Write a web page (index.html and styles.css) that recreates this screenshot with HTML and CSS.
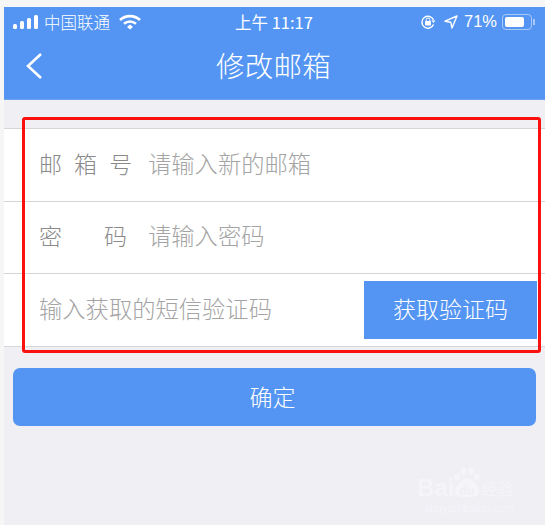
FILE: index.html
```html
<!DOCTYPE html>
<html lang="zh-CN">
<head>
    <meta charset="UTF-8">
    <meta name="viewport" content="width=device-width, initial-scale=1.0">
    <title>修改邮箱</title>
    <link rel="stylesheet" href="styles.css">
</head>
<body>
    <div class="screen">
        <header class="top">
            <div class="status">
                <div class="status-left">
                    <svg class="signal" width="33" height="16" viewBox="0 0 33 16">
                        <rect x="0" y="10" width="4" height="5" rx="1.5"/>
                        <rect x="7" y="7" width="4" height="8" rx="1.5"/>
                        <rect x="14" y="4" width="4" height="11" rx="1.5"/>
                        <rect x="21" y="1" width="4" height="14" rx="1.5"/>
                    </svg>
                    <span class="carrier">中国联通</span>
                    <svg class="wifi" width="22" height="16" viewBox="0 0 22 16">
                        <path d="M1 6 C6.5 .8 15.500 .8 21 6" fill="none" stroke="#fff" stroke-width="2.600"/>
                        <path d="M5 9.800 C8.500 6.800 13.500 6.800 17 9.800" fill="none" stroke="#fff" stroke-width="2.600"/>
                        <path d="M8 13 L11 10.600 L14 13 L11 15.500 Z" fill="#fff"/>
                    </svg>
                </div>
                <div class="clock">上午 11:17</div>
                <div class="status-right">
                    <svg width="16" height="16" viewBox="0 0 16 16">
                        <path d="M13.500 6 A6 6 0 1 0 13.500 10.500" fill="none" stroke="#fff" stroke-width="1.500"/>
                        <path d="M11.500 6.500 L15.500 6.500 L13.500 9 Z" fill="#fff"/>
                        <rect x="5" y="7" width="6" height="4.500" rx=".8" fill="#fff"/>
                        <path d="M6.200 7 V5.800 a1.800 1.800 0 0 1 3.600 0 V7" fill="none" stroke="#fff" stroke-width="1"/>
                    </svg>
                    <svg class="arrow" width="14" height="14" viewBox="0 0 14 14">
                        <path d="M13 1 L1 6.200 L6.800 7.300 L8 13 Z" fill="none" stroke="#fff" stroke-width="1.400" stroke-linejoin="round"/>
                    </svg>
                    <span class="battery-text">71%</span>
                    <div class="battery"><div class="battery-level"></div></div>
                    <div class="battery-cap"></div>
                </div>
            </div>
            <div class="title-bar">
                <svg class="back" width="18" height="28" viewBox="0 0 18 28">
                    <path d="M16 2 L3 14 L16 26" fill="none" stroke="#fff" stroke-width="2.600"/>
                </svg>
                <h1>修改邮箱</h1>
            </div>
        </header>

        <div class="form-list">
            <div class="row">
                <span class="label">邮 箱 号</span>
                <span class="hint">请输入新的邮箱</span>
            </div>
            <div class="row">
                <span class="label label-wide">密 码</span>
                <span class="hint">请输入密码</span>
            </div>
            <div class="row row-code">
                <span class="hint">输入获取的短信验证码</span>
                <button class="code-btn">获取验证码</button>
            </div>
        </div>

        <button class="submit">确定</button>

        <div class="highlight"></div>

        <div class="watermark">
            <svg class="paw" width="28" height="31" viewBox="0 0 28 31">
                <ellipse cx="4" cy="10" rx="3" ry="3.500"/>
                <ellipse cx="10.500" cy="4" rx="3" ry="3.800"/>
                <ellipse cx="18" cy="4" rx="3" ry="3.800"/>
                <ellipse cx="24" cy="10" rx="3" ry="3.500"/>
                <path d="M14 11 C19 11 26 19 26 25 C26 30 21 30 14 30 C7 30 2 30 2 25 C2 19 9 11 14 11 Z"/>
            </svg>
            <div class="wm-line"><span class="wm-bai">Bai</span><span class="wm-du">du</span><span class="wm-jy">经验</span></div>
            <div class="wm-url">jingyan.baidu.com</div>
        </div>
    </div>
</body>
</html>
```

FILE: styles.css
```css
* {
    box-sizing: border-box;
}
html, body {
    height: 100%;
}
body {
    margin: 0;
    padding: 7px 0 0 4px;
    background-color: #f6f6f6;
    font-family: "Noto Sans CJK SC", "Liberation Sans", sans-serif;
    overflow: hidden;
}
.screen {
    height: 518px;
    background-color: #efeff4;
    display: flex;
    flex-direction: column;
}
.top {
    height: 93px;
    background-color: #5495f3;
    color: #fff;
    border-bottom: 1px solid #6ea3ee;
}
.status {
    height: 29px;
    padding: 0 10px 0 9px;
    display: flex;
    align-items: center;
    justify-content: space-between;
    position: relative;
    font-size: 15px;
}
.status-left, .status-right {
    display: flex;
    align-items: center;
}
.signal {
    fill: #fff;
    margin-right: -2px;
}
.carrier {
    font-size: 16.500px;
    margin-right: 9px;
    font-weight: 300;
}
.clock {
    position: absolute;
    left: 231px;
    top: 4px;
    font-size: 16.500px;
    line-height: 22px;
}
.status-right svg {
    margin-right: 6px;
}
.status-right svg:first-child {
    margin: 0 8px 0 0;
}
.battery-text {
    font-size: 16.500px;
    margin-right: 5px;
    font-family: "Liberation Sans", sans-serif;
}
.battery {
    width: 30px;
    height: 16px;
    border: 1px solid #a9c8f6;
    border-radius: 4px;
    padding: 2px;
}
.battery-level {
    width: 19px;
    height: 100%;
    background-color: #fff;
    border-radius: 2px;
}
.battery-cap {
    width: 2px;
    height: 6px;
    margin-left: 1px;
    background-color: #a9c8f6;
}
.title-bar {
    height: 62px;
    position: relative;
    display: flex;
    align-items: center;
    justify-content: center;
    padding-bottom: 6px;
}
.back {
    position: absolute;
    left: 21px;
    top: 16px;
}
h1 {
    margin: 0 2px 0 0;
    font-size: 28.500px;
    font-weight: 300;
    letter-spacing: .3px;
}
.form-list {
    margin-top: 28px;
    background-color: #fff;
    border-top: 1px solid #d6d6d8;
}
.row {
    height: 72.500px;
    padding-left: 35px;
    padding-bottom: 4px;
    display: flex;
    align-items: center;
    border-bottom: 1px solid #d6d6d8;
    font-size: 23px;
    font-weight: 300;
}
.label {
    width: 109px;
    color: #8a8a8a;
    white-space: pre;
    word-spacing: 7px;
}
.label-wide {
    word-spacing: 37px;
}
.hint {
    font-size: 23.300px;
    color: #a4a4a4;
}
.row-code {
    justify-content: space-between;
    padding-right: 8px;
    padding-bottom: 0;
}
.row-code .hint {
    margin-bottom: 4px;
}
.code-btn {
    width: 173px;
    height: 58px;
    border: none;
    padding: 0 0 4px;
    background-color: #5495f3;
    color: #fff;
    font-family: inherit;
    font-size: 23px;
    font-weight: 300;
}
.submit {
    margin: 21px 0 0 9px;
    width: 523px;
    height: 58px;
    border: none;
    padding: 0 4px 2px 0;
    border-radius: 7px;
    background-color: #5495f3;
    color: #fff;
    font-family: inherit;
    font-size: 23px;
    font-weight: 300;
}
/* red annotation box drawn over the form */
.highlight {
    position: absolute;
    left: 22px;
    top: 117px;
    width: 519px;
    height: 236px;
    border: 3px solid #fb1010;
    border-radius: 3px;
}
/* site watermark, bottom right */
.watermark {
    position: absolute;
    left: 417px;
    top: 474px;
    width: 128px;
    color: #f5f5f9;
    font-family: "Liberation Sans", sans-serif;
}
.paw {
    position: absolute;
    left: 36px;
    top: -7px;
    fill: #f5f5f9;
}
.wm-line {
    position: relative;
    display: flex;
    align-items: center;
    height: 28px;
    font-weight: bold;
    font-size: 24px;
}
.wm-du {
    width: 25px;
    margin-top: 6px;
    font-size: 12px;
    text-align: center;
    color: #efeff4;
    margin-right: 2px;
}
.wm-jy {
    font-family: "Noto Sans CJK SC", sans-serif;
    font-size: 16px;
    font-weight: normal;
}
.wm-url {
    padding-left: 8px;
    font-size: 11px;
    white-space: nowrap;
}
```
